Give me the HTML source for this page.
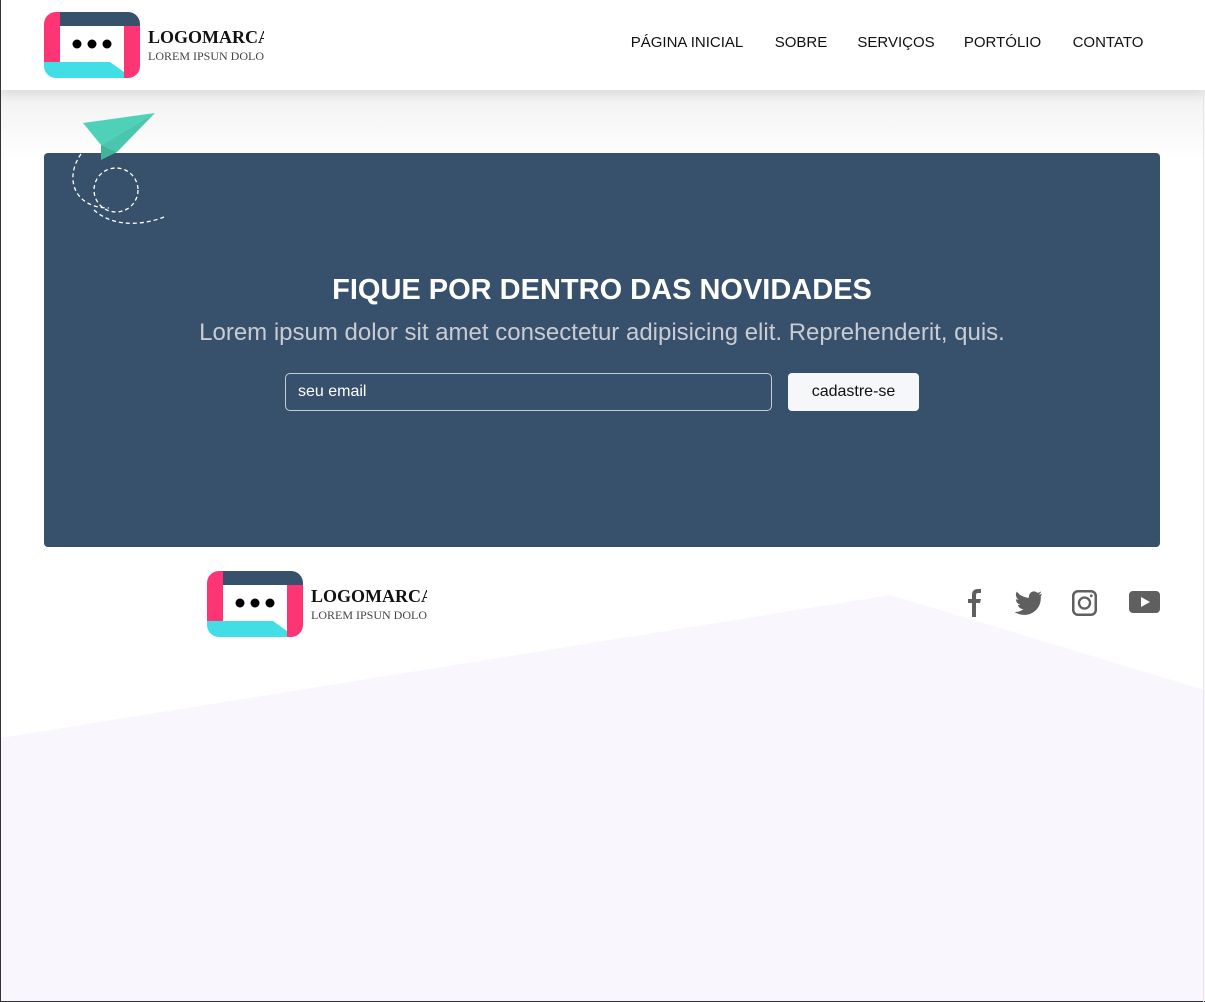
<!DOCTYPE html>
<html><head><meta charset="utf-8"><style>
*{margin:0;padding:0;box-sizing:border-box}
body{width:1205px;height:1002px;position:relative;overflow:hidden;background:#fff;font-family:"Liberation Sans",Arial,sans-serif}
.header{position:absolute;left:0;top:0;width:1205px;height:90px;background:#fff;box-shadow:0 4px 12px rgba(0,0,0,.1);z-index:2}
.grad{position:absolute;left:0;top:90px;width:1205px;height:70px;background:linear-gradient(#f1f1f1,#fff)}
.nav{position:absolute;top:34px;font-size:15px;color:#111;white-space:nowrap;text-align:center}
.logo{position:absolute}
.lt{position:absolute;font-family:"Liberation Serif",serif;white-space:nowrap;overflow:hidden}
.card{position:absolute;left:44px;top:153px;width:1116px;height:394px;background:#37506b;border-radius:4px}
h1{position:absolute;left:0;width:1116px;top:121px;text-align:center;color:#fff;font-size:29px;font-weight:bold}
.sub{position:absolute;left:0;width:1116px;top:166px;text-align:center;color:#c9ccd2;font-size:24px}
.inp{position:absolute;left:241px;top:220px;width:487px;height:38px;border:1px solid #c8ccd2;border-radius:5px;color:#fff;font-size:16px;padding:9px 12px}
.btn{position:absolute;left:744px;top:220px;width:131px;height:38px;background:#f6f7f9;border-radius:4px;color:#111;font-size:16px;text-align:center;line-height:38px}
.ln{position:absolute;z-index:5}
</style></head><body>
<div class="grad"></div>
<svg style="position:absolute;left:0;top:595px" width="1205" height="407"><polygon points="0,143 890,0 1205,95 1205,407 0,407" fill="#f9f7fd"/></svg>
<div class="header">
<svg class="logo" style="left:44px;top:12px" width="96" height="66" viewBox="0 0 96 66">
<defs><clipPath id="c"><rect width="96" height="66" rx="12"/></clipPath></defs>
<g clip-path="url(#c)"><rect width="96" height="66" fill="#fff"/><rect x="0" y="0" width="16" height="50" fill="#fd3574"/><rect x="16" y="0" width="80" height="14" fill="#37506b"/><rect x="80" y="14" width="16" height="52" fill="#fd3574"/><polygon points="0,50 66,50 80,60 80,66 0,66" fill="#41dfe5"/></g>
<circle cx="33" cy="32" r="4.5"/><circle cx="48" cy="32" r="4.5"/><circle cx="63" cy="32" r="4.5"/></svg>
<div class="lt" style="left:148px;top:27px;width:116px;font-size:18px;font-weight:bold;color:#111">LOGOMARCA</div>
<div class="lt" style="left:148px;top:49px;width:116px;font-size:12px;color:#444">LOREM IPSUN DOLOR</div>
<div class="nav" style="left:626px;width:122px">PÁGINA INICIAL</div>
<div class="nav" style="left:772px;width:58px">SOBRE</div>
<div class="nav" style="left:855px;width:82px">SERVIÇOS</div>
<div class="nav" style="left:961px;width:83px">PORTÓLIO</div>
<div class="nav" style="left:1069px;width:78px">CONTATO</div>
</div>
<div class="card">
<svg style="position:absolute;left:25px;top:0" width="110" height="80" fill="none" stroke="#fff" stroke-width="1.3" stroke-dasharray="4 3"><path d="M12 1 C-5 25 5 55 40 55"/><circle cx="47" cy="37" r="22"/><path d="M25 57 C45 75 75 72 95 64"/></svg>
<h1>FIQUE POR DENTRO DAS NOVIDADES</h1>
<div class="sub">Lorem ipsum dolor sit amet consectetur adipisicing elit. Reprehenderit, quis.</div>
<div class="inp">seu email</div>
<div class="btn">cadastre-se</div>
</div>
<svg style="position:absolute;left:83px;top:112px;z-index:3" width="75" height="50"><polygon points="0,11 72,1 18,33" fill="#4fd1b8"/><polygon points="18,33 72,1 34,40" fill="#4bc6ae"/><polygon points="18,33 34,40 18,48" fill="#3fb498"/></svg>
<svg class="logo" style="left:207px;top:571px" width="96" height="66" viewBox="0 0 96 66">
<defs><clipPath id="c2"><rect width="96" height="66" rx="12"/></clipPath></defs>
<g clip-path="url(#c2)"><rect width="96" height="66" fill="#fff"/><rect x="0" y="0" width="16" height="50" fill="#fd3574"/><rect x="16" y="0" width="80" height="14" fill="#37506b"/><rect x="80" y="14" width="16" height="52" fill="#fd3574"/><polygon points="0,50 66,50 80,60 80,66 0,66" fill="#41dfe5"/></g>
<circle cx="33" cy="32" r="4.5"/><circle cx="48" cy="32" r="4.5"/><circle cx="63" cy="32" r="4.5"/></svg>
<div class="lt" style="left:311px;top:586px;width:116px;font-size:18px;font-weight:bold;color:#111">LOGOMARCA</div>
<div class="lt" style="left:311px;top:608px;width:116px;font-size:12px;color:#444">LOREM IPSUN DOLOR</div>
<svg style="position:absolute;left:965px;top:589px" width="200" height="30" fill="#5f5f5f">
<path d="M7 28 V14 H3 V10 H7 V6 C7 2 9 0 13 0 H16 V4 H13 C11.5 4 11 5 11 6 V10 H16 L15 14 H11 V28 Z"/>
<g transform="translate(47,1) scale(1.25)"><path d="M24 3 C23.1 3.4 22.2 3.6 21.2 3.8 C22.2 3.2 23 2.2 23.4 1.1 C22.4 1.7 21.4 2.1 20.3 2.3 C17.8 -0.3 13.2 1.6 13.5 6.2 C9.6 6 6.2 4.2 3.8 1.3 C2.5 3.5 3.2 6.4 5.3 7.8 C4.5 7.8 3.8 7.6 3.1 7.2 C3.1 9.5 4.7 11.4 6.9 11.9 C6.2 12.1 5.4 12.1 4.7 12 C5.3 13.9 7.1 15.3 9.2 15.3 C7.1 17 4.5 17.8 1.8 17.5 C11.8 23.8 24 17 23 5 C23.3 4.5 23.7 3.8 24 3 Z"/></g>
<path fill-rule="evenodd" d="M113 1 h13 a6 6 0 0 1 6 6 v14 a6 6 0 0 1 -6 6 h-13 a6 6 0 0 1 -6 -6 v-14 a6 6 0 0 1 6 -6 Z M113 3.5 a3.5 3.5 0 0 0 -3.5 3.5 v14 a3.5 3.5 0 0 0 3.5 3.5 h13 a3.5 3.5 0 0 0 3.5 -3.5 v-14 a3.5 3.5 0 0 0 -3.5 -3.5 Z"/>
<circle cx="119.5" cy="14" r="5.5" fill="none" stroke="#5f5f5f" stroke-width="2.3"/><circle cx="126.3" cy="6.8" r="1.4"/>
<path fill-rule="evenodd" d="M168 2 h23 a4 4 0 0 1 4 4 v14 a4 4 0 0 1 -4 4 h-23 a4 4 0 0 1 -4 -4 v-14 a4 4 0 0 1 4 -4 Z M176 8 v10 l9 -5 Z"/>
</svg>
<div class="ln" style="left:0;top:0;width:1px;height:1002px;background:#333"></div>
<div class="ln" style="left:0;top:1001px;width:1205px;height:1px;background:#333"></div>
<div class="ln" style="left:1203px;top:90px;width:1px;height:912px;background:#e6e6e6"></div>
</body></html>
